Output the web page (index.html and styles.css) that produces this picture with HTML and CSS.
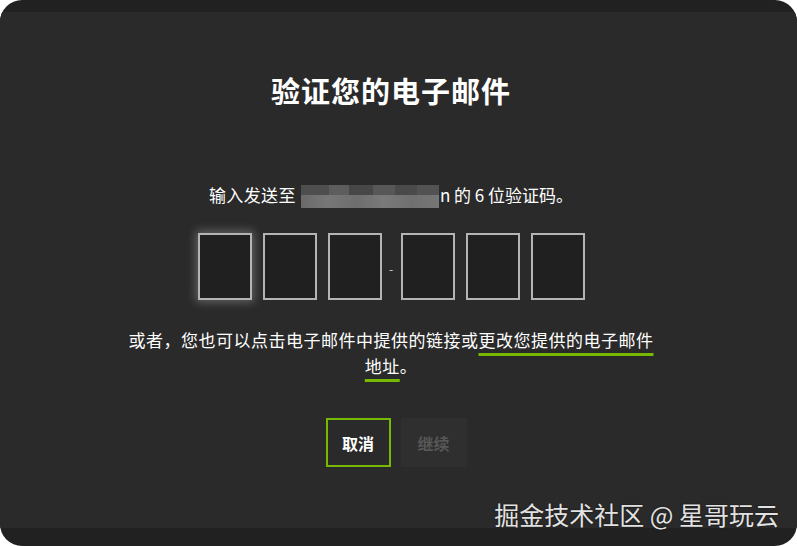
FILE: index.html
```html
<!DOCTYPE html>
<html lang="zh">
<head>
<meta charset="utf-8">
<link rel="stylesheet" href="styles.css">
</head>
<body>
<div class="frame">
  <div class="topbar"></div>
  <main class="panel">
    <h1 class="title">验证您的电子邮件</h1>
    <p class="sub">输入发送至<span class="blur"><span class="b1"></span><span class="b2"></span><span class="b3"></span><span class="b4"></span><span class="b5"></span><span class="b6"></span></span><span class="tail">n 的 6 位验证码。</span></p>
    <div class="code">
      <div class="box focus"></div>
      <div class="box"></div>
      <div class="box"></div>
      <span class="dash">-</span>
      <div class="box"></div>
      <div class="box"></div>
      <div class="box"></div>
    </div>
    <p class="note">或者，您也可以点击电子邮件中提供的链接或<a class="link">更改您提供的电子邮件地址</a>。</p>
    <div class="actions">
      <button class="btn cancel">取消</button>
      <button class="btn next">继续</button>
    </div>
  </main>
  <div class="bottombar"></div>
  <div class="watermark">掘金技术社区 @ 星哥玩云</div>
</div>
</body>
</html>
```

FILE: styles.css
```css
html, body {
  margin: 0;
  padding: 0;
  background: #ffffff;
}
.frame {
  position: relative;
  width: 797px;
  height: 546px;
  border-radius: 22px;
  overflow: hidden;
  background: #212121;
  display: flex;
  flex-direction: column;
  font-family: "Noto Sans CJK SC", "Noto Sans", sans-serif;
}
.topbar {
  height: 12px;
  flex: none;
}
.bottombar {
  height: 18px;
  flex: none;
}
.panel {
  flex: 1;
  background: #2a2a2a;
  display: flex;
  flex-direction: column;
  align-items: center;
  padding: 58px 15px 0 0;
  box-sizing: border-box;
}
.title {
  margin: 0;
  font-size: 29px;
  line-height: 40px;
  font-weight: 700;
  color: #ffffff;
  letter-spacing: 1px;
}
.sub {
  margin: 73px 0 0;
  font-size: 17px;
  line-height: 24px;
  color: #ffffff;
  letter-spacing: 0.4px;
  display: flex;
  align-items: center;
  white-space: pre;
}
.blur {
  display: inline-grid;
  grid-template-columns: 28px 20px 24px 22px 22px 22px;
  grid-template-rows: 10px 13px;
  width: 138px;
  height: 23px;
  margin: 0 1px 0 5px;
  position: relative;
  top: 1px;
}
.blur span:nth-child(1) { background: #4e4e4e; }
.blur span:nth-child(2) { background: #5d5d5d; }
.blur span:nth-child(3) { background: #474747; }
.blur span:nth-child(4) { background: #575757; }
.blur span:nth-child(5) { background: #4a4a4a; }
.blur span:nth-child(6) { background: #525252; }
.blur::after {
  content: "";
  grid-column: 1 / 7;
  grid-row: 2;
  background: linear-gradient(90deg, #6a6a6a 0%, #777 20%, #6e6e6e 40%, #7a7a7a 60%, #707070 80%, #767676 100%);
}
.tail {
  color: #ffffff;
  letter-spacing: 0;
}
.code {
  margin-top: 26px;
  display: flex;
  align-items: center;
  gap: 11px;
}
.box {
  width: 54px;
  height: 67px;
  box-sizing: border-box;
  border: 2px solid #b4b4b4;
  background: #202020;
}
.box.focus {
  box-shadow: 0 0 9px 2px rgba(255, 255, 255, 0.28);
}
.dash {
  color: #d0d0d0;
  font-size: 12px;
  line-height: 12px;
  width: 7px;
  margin: 4px -5px 0 -5px;
  text-align: center;
}
.note {
  margin: 27px 0 0;
  width: 540px;
  text-align: center;
  font-size: 17px;
  line-height: 26px;
  letter-spacing: 0.5px;
  color: #ffffff;
}
.link {
  color: #ffffff;
  text-decoration: underline;
  text-decoration-color: #76b900;
  text-decoration-thickness: 3px;
  text-underline-offset: 6px;
}
.actions {
  margin: 39px 0 0 10px;
  display: flex;
  gap: 10px;
}
.btn {
  width: 66px;
  height: 49px;
  font-family: inherit;
  font-size: 16px;
  font-weight: 700;
  padding: 0;
  box-sizing: border-box;
  cursor: pointer;
}
.cancel {
  width: 65px;
  background: #2a2a2a;
  border: 2px solid #76b900;
  color: #ffffff;
}
.next {
  background: #2f2f2f;
  border: none;
  color: #575757;
}
.watermark {
  position: absolute;
  right: 18px;
  bottom: 17px;
  font-size: 25px;
  line-height: 30px;
  color: #e2e2e2;
  text-shadow: 0 0 2px rgba(0, 0, 0, 0.6);
}
```
